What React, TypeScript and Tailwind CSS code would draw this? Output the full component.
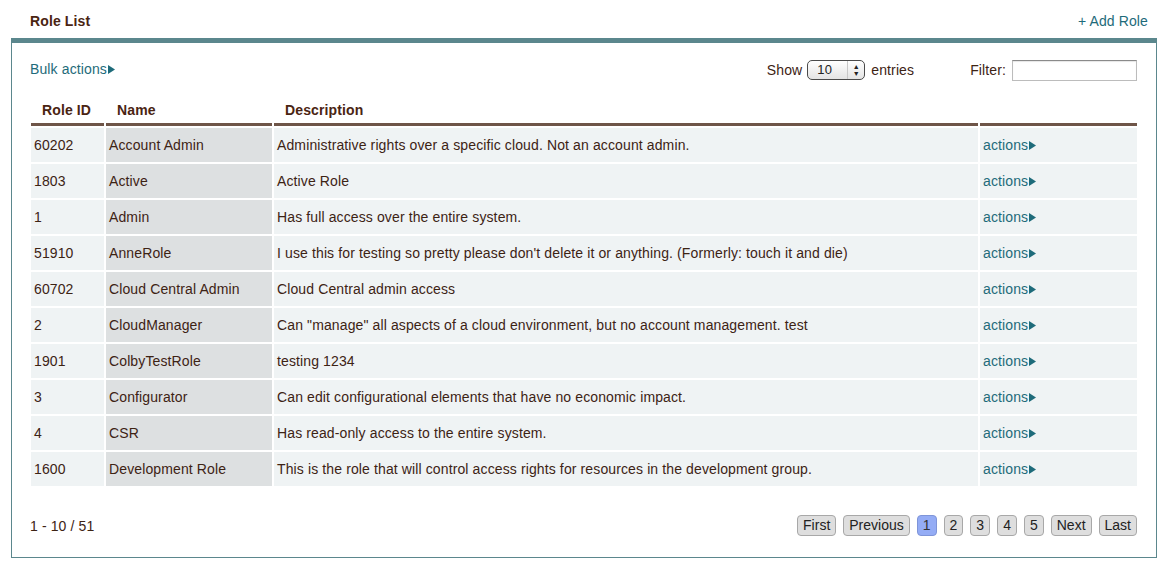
const roles = [
  { id: "60202", name: "Account Admin", description: "Administrative rights over a specific cloud. Not an account admin." },
  { id: "1803", name: "Active", description: "Active Role" },
  { id: "1", name: "Admin", description: "Has full access over the entire system." },
  { id: "51910", name: "AnneRole", description: "I use this for testing so pretty please don't delete it or anything. (Formerly: touch it and die)" },
  { id: "60702", name: "Cloud Central Admin", description: "Cloud Central admin access" },
  { id: "2", name: "CloudManager", description: "Can \"manage\" all aspects of a cloud environment, but no account management. test" },
  { id: "1901", name: "ColbyTestRole", description: "testing 1234" },
  { id: "3", name: "Configurator", description: "Can edit configurational elements that have no economic impact." },
  { id: "4", name: "CSR", description: "Has read-only access to the entire system." },
  { id: "1600", name: "Development Role", description: "This is the role that will control access rights for resources in the development group." },
];

const pages = ["First", "Previous", "1", "2", "3", "4", "5", "Next", "Last"];

function Arrow() {
  return (
    <svg width="7" height="9" viewBox="0 0 7 9" className="ml-[1px] inline-block">
      <path d="M0 0 L7 4.5 L0 9 Z" fill="#1e6b7a" />
    </svg>
  );
}

function SelectBox() {
  return (
    <div className="flex h-[20px] w-[58px] items-stretch rounded-[5px] border border-[#4a4a4a] bg-gradient-to-b from-white to-[#e4e4e4] text-[13px] text-[#222]">
      <div className="flex flex-1 items-center pl-[9px]">10</div>
      <div className="flex w-[17px] flex-col items-center justify-center border-l border-[#c8c8c8] text-[7px] leading-[7px]">
        <span>▲</span>
        <span>▼</span>
      </div>
    </div>
  );
}

export default function App() {
  return (
    <div className="h-[570px] w-[1168px] bg-white text-[14px] tracking-[0.12px] text-[#3d2314]" style={{ fontFamily: '"Liberation Sans", Arial, sans-serif' }}>
      <div className="flex h-[38px] items-center justify-between pl-[30px] pr-[20px] pt-[4px]">
        <span className="font-bold text-[#4a2412]">Role List</span>
        <span className="text-[#1e6b7a]">+ Add Role</span>
      </div>

      <div className="mx-[11px] h-[520px] border border-t-[5px] border-[#5b878d] px-[19px]">
        <div className="flex h-[46px] items-center pt-[8px]">
          <span className="-ml-[1px] -mt-[2px] flex items-center text-[#1e6b7a]">
            Bulk actions<Arrow />
          </span>
          <div className="ml-auto flex items-center">
            <span className="mt-[1px]">Show</span>
            <div className="ml-[5px] mr-[6px]">
              <SelectBox />
            </div>
            <span className="mt-[1px]">entries</span>
          </div>
          <div className="ml-[56px] flex items-center">
            <span className="mt-[1px]">Filter:</span>
            <div className="ml-[6px] h-[21px] w-[125px] border border-[#bcbcbc] border-t-[#8a8a8a] shadow-[inset_0_1px_1px_rgba(0,0,0,0.1)]" />
          </div>
        </div>

        <div className="mt-[11px] grid grid-cols-[73px_166px_704px_157px] gap-x-[2px] gap-y-[2px]">
          <div className="border-b-[3px] border-[#6e5548] px-[11px] pb-[2px] font-bold text-[#4a2412]">Role ID</div>
          <div className="border-b-[3px] border-[#6e5548] px-[11px] pb-[2px] font-bold text-[#4a2412]">Name</div>
          <div className="border-b-[3px] border-[#6e5548] px-[11px] pb-[2px] font-bold text-[#4a2412]">Description</div>
          <div className="border-b-[3px] border-[#6e5548]" />
          {roles.map((r) => (
            <div key={r.id} className="contents">
              <div className="flex h-[34px] items-center bg-[#eff3f4] px-[3px]">{r.id}</div>
              <div className="flex h-[34px] items-center bg-[#dde0e1] px-[3px]">{r.name}</div>
              <div className="flex h-[34px] items-center whitespace-nowrap bg-[#eff3f4] px-[3px]">{r.description}</div>
              <div className="flex h-[34px] items-center bg-[#eff3f4] px-[3px] text-[#1e6b7a]">
                actions<Arrow />
              </div>
            </div>
          ))}
        </div>

        <div className="mt-[28px] flex items-center justify-between">
          <span className="-ml-[1px] mt-[2px]">1 - 10 / 51</span>
          <div className="flex items-center gap-[7px] tracking-normal">
            {pages.map((p) => (
              <div
                key={p}
                className={
                  p === "1"
                    ? "flex h-[21px] items-center rounded-[4px] border border-[#7f95d8] bg-[#94acf5] px-[5px] text-[#333]"
                    : "flex h-[21px] items-center rounded-[4px] border border-[#a8a8a8] bg-[#dedede] px-[5px] text-[#222]"
                }
              >
                {p}
              </div>
            ))}
          </div>
        </div>
      </div>
    </div>
  );
}
